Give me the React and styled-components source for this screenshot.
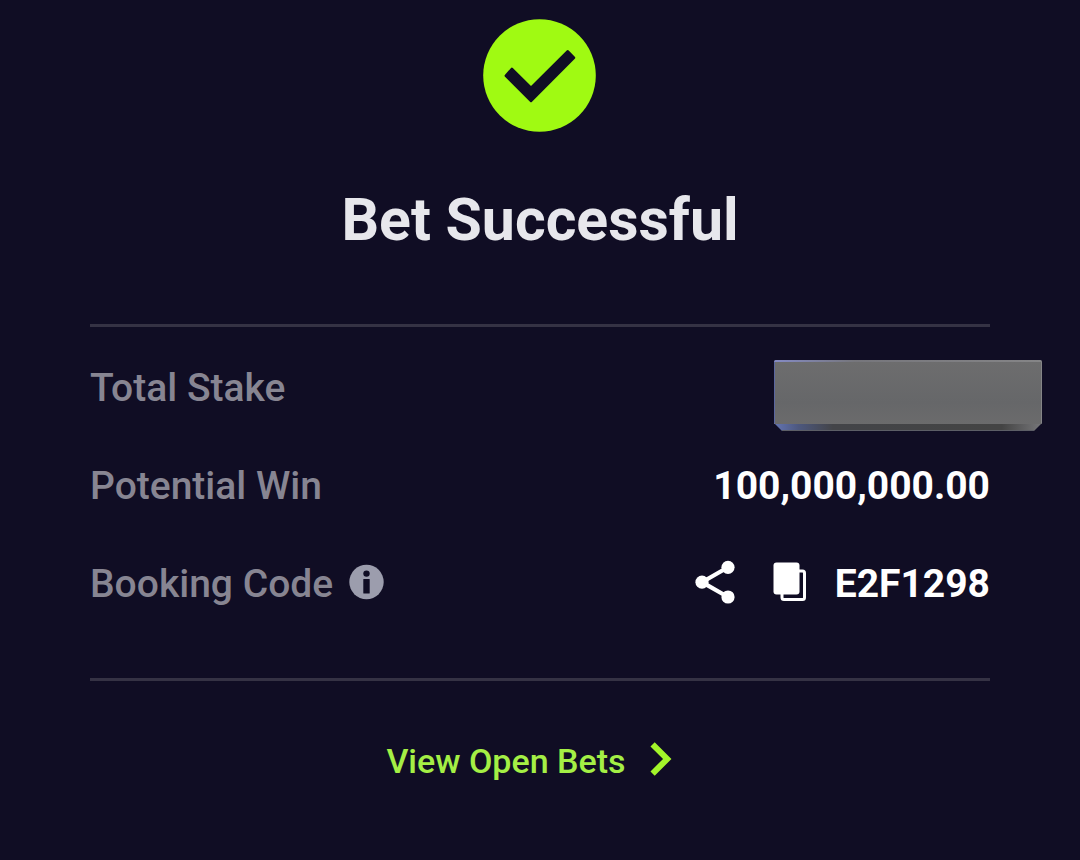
import React from 'react';
import styled, { createGlobalStyle } from 'styled-components';

const GlobalStyle = createGlobalStyle`
  * {
    box-sizing: border-box;
  }

  body {
    margin: 0;
    background-color: #100d24;
    font-family: Roboto, "Liberation Sans", sans-serif;
  }
`;

const SuccessIcon = () => (
  <svg width="114" height="114" viewBox="0 0 114 114" aria-hidden="true">
    <circle cx="56.5" cy="57.5" r="56.3" fill="#a0fa12" />
    <path
      d="M29.8 49.9 48 68.1 83.7 32.6Q84.7 31.6 85.7 32.6L91.8 38.7Q92.8 39.7 91.8 40.7L49 83.7Q48 84.7 47 83.7L22 58.8Q21 57.8 22 56.8L27.8 50.2Q28.8 49 29.8 49.9Z"
      fill="#100d24"
    />
  </svg>
);

const InfoIcon = () => (
  <svg width="36" height="36" viewBox="0 0 36 36" aria-hidden="true">
    <circle cx="17.5" cy="18" r="17.2" fill="#9c9dad" />
    <circle cx="17.5" cy="9.6" r="3.2" fill="#100d24" />
    <rect x="14.3" y="15" width="6.4" height="14.5" rx="0.5" fill="#100d24" />
  </svg>
);

const ShareIcon = () => (
  <svg width="40" height="44" viewBox="0 0 40 44" aria-hidden="true">
    <path d="M33 7.3 7 22.2 33 37" fill="none" stroke="#fff" strokeWidth="4.2" />
    <circle cx="33" cy="7.3" r="6.6" fill="#fff" />
    <circle cx="7" cy="22.2" r="6.6" fill="#fff" />
    <circle cx="33" cy="37" r="6.6" fill="#fff" />
  </svg>
);

const CopyIcon = () => (
  <svg width="34" height="40" viewBox="0 0 34 40" aria-hidden="true">
    <rect x="9" y="9" width="22.5" height="28.5" rx="2" fill="none" stroke="#fff" strokeWidth="3" />
    <rect x="0.5" y="0.5" width="26" height="32" rx="3" fill="#fff" />
  </svg>
);

const ChevronIcon = () => (
  <svg width="22" height="34" viewBox="0 0 22 34" aria-hidden="true">
    <path d="M2.6 2.4 17.2 17 2.6 31.6" fill="none" stroke="#a3f52a" strokeWidth="6" />
  </svg>
);

const HiddenAmount = () => (
  <svg width="268" height="72" viewBox="0 0 268 72" role="img" aria-label="Hidden amount">
    <defs>
      <linearGradient id="face" x1="0" y1="0" x2="0" y2="1">
        <stop offset="0" stopColor="#6d6d6e" />
        <stop offset="0.65" stopColor="#666769" />
        <stop offset="1" stopColor="#6b6b6c" />
      </linearGradient>
      <linearGradient id="bevel" x1="0" y1="0" x2="1" y2="0">
        <stop offset="0" stopColor="#6475b4" />
        <stop offset="0.09" stopColor="#4d587f" />
        <stop offset="0.22" stopColor="#434448" />
        <stop offset="0.85" stopColor="#444444" />
        <stop offset="1" stopColor="#77777a" />
      </linearGradient>
      <linearGradient id="edge" x1="0" y1="0" x2="1" y2="0">
        <stop offset="0" stopColor="#858bc5" />
        <stop offset="0.3" stopColor="#76767c" />
        <stop offset="1" stopColor="#858587" />
      </linearGradient>
    </defs>
    <path d="M0 63H268L260 71H8Z" fill="url(#bevel)" />
    <rect width="268" height="64" rx="1.5" fill="url(#edge)" />
    <path d="M0 2V63" stroke="#5b67a0" strokeWidth="2" />
    <rect x="1" y="2" width="266" height="62" fill="url(#face)" />
    <path d="M8 70.5H260" stroke="#5c5e66" />
  </svg>
);

const App = () => {
  return (
    <>
      <GlobalStyle />
      <Page>
        <SuccessIcon />
        <Title>Bet Successful</Title>

        <Details>
          <Row>
            <Label>Total Stake</Label>
            <Value>
              <Cover>
                <HiddenAmount />
              </Cover>
            </Value>
          </Row>
          <Row>
            <Label>Potential Win</Label>
            <Value>100,000,000.00</Value>
          </Row>
          <Row>
            <Label>
              Booking Code
              <IconButton type="button" aria-label="About booking code" $gap="16px">
                <InfoIcon />
              </IconButton>
            </Label>
            <Value>
              <IconButton type="button" aria-label="Share booking code">
                <ShareIcon />
              </IconButton>
              <IconButton type="button" aria-label="Copy booking code" $gap="38px">
                <CopyIcon />
              </IconButton>
              <Code>E2F1298</Code>
            </Value>
          </Row>
        </Details>

        <BetsLink href="#open-bets">
          View Open Bets
          <ChevronIcon />
        </BetsLink>
      </Page>
    </>
  );
};

const Page = styled.main`
  display: flex;
  flex-direction: column;
  align-items: center;
  min-height: 100vh;
  padding: 18px 90px 48px;
  background-color: #100d24;
  overflow-x: hidden;
`;

const Title = styled.h1`
  margin: 52px 0 68px;
  color: #e7e7ec;
  font-size: 59px;
  font-weight: 700;
  line-height: 72px;
`;

const Details = styled.dl`
  width: 100%;
  margin: 0;
  padding: 12px 0 45px;
  border-top: 3px solid #353244;
  border-bottom: 3px solid #353244;
`;

const Row = styled.div`
  position: relative;
  display: flex;
  justify-content: space-between;
  align-items: center;
  min-height: 98px;
  font-size: 39px;
  line-height: 48px;
`;

const Label = styled.dt`
  display: flex;
  align-items: center;
  color: #878592;
  font-weight: 500;
`;

const Value = styled.dd`
  display: flex;
  align-items: center;
  margin: 0;
  color: #ffffff;
  font-weight: 700;
`;

const Code = styled.span`
  margin-left: 28px;
`;

const Cover = styled.span`
  position: absolute;
  top: 21px;
  right: -52px;
  display: flex;
`;

const IconButton = styled.button`
  display: flex;
  margin: 0 0 0 ${({ $gap }) => $gap || '0'};
  padding: 0 0 4px;
  border: none;
  background: none;
  cursor: pointer;
`;

const BetsLink = styled.a`
  display: flex;
  align-items: center;
  gap: 24px;
  margin-top: 60px;
  padding-right: 22px;
  color: #a4ef45;
  font-size: 34px;
  font-weight: 500;
  line-height: 40px;
  text-decoration: none;

  svg {
    margin-bottom: 4px;
  }
`;

export default App;
